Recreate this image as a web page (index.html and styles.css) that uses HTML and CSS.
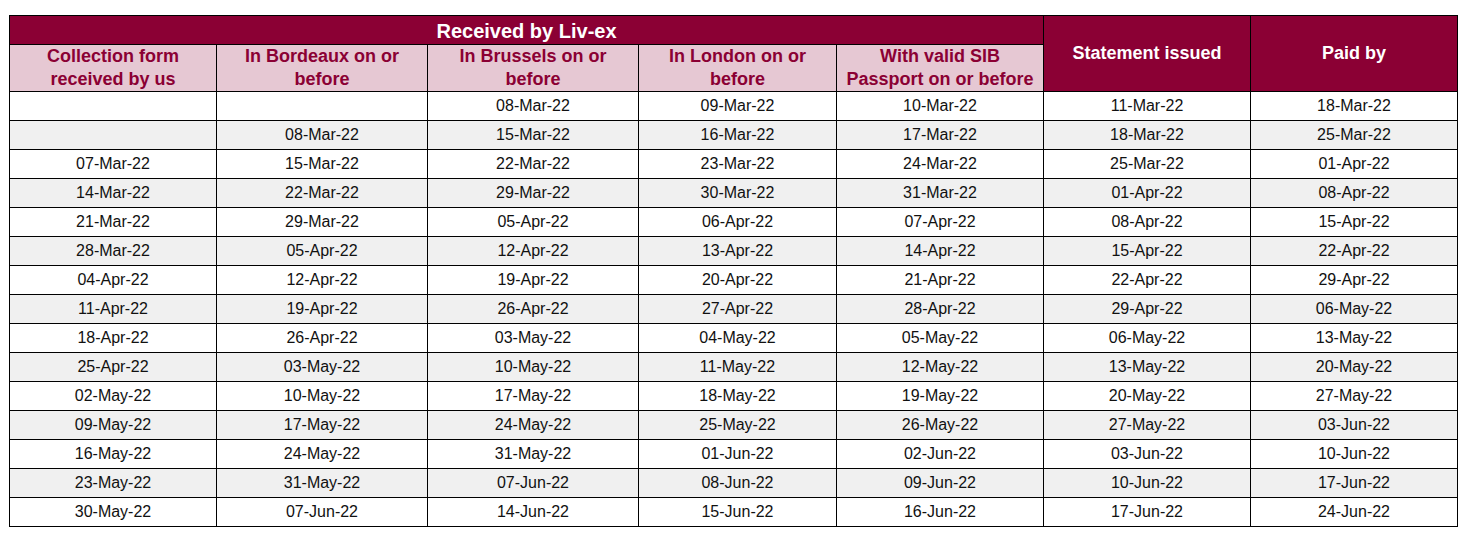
FILE: index.html
```html
<!DOCTYPE html>
<html>
<head>
<meta charset="utf-8">
<link rel="stylesheet" href="styles.css">
</head>
<body>
<table class="sched">
  <colgroup>
    <col class="c1"><col class="c2"><col class="c3"><col class="c4"><col class="c5"><col class="c6"><col class="c7">
  </colgroup>
  <thead>
    <tr class="h1">
      <th colspan="5" class="dark top">Received by Liv-ex</th>
      <th rowspan="2" class="dark side">Statement issued</th>
      <th rowspan="2" class="dark side">Paid by</th>
    </tr>
    <tr class="h2">
      <th class="pink">Collection form<br>received by us</th>
      <th class="pink">In Bordeaux on or<br>before</th>
      <th class="pink">In Brussels on or<br>before</th>
      <th class="pink">In London on or<br>before</th>
      <th class="pink">With valid SIB<br>Passport on or before</th>
    </tr>
  </thead>
  <tbody>
    <tr><td></td><td></td><td>08-Mar-22</td><td>09-Mar-22</td><td>10-Mar-22</td><td>11-Mar-22</td><td>18-Mar-22</td></tr>
    <tr><td></td><td>08-Mar-22</td><td>15-Mar-22</td><td>16-Mar-22</td><td>17-Mar-22</td><td>18-Mar-22</td><td>25-Mar-22</td></tr>
    <tr><td>07-Mar-22</td><td>15-Mar-22</td><td>22-Mar-22</td><td>23-Mar-22</td><td>24-Mar-22</td><td>25-Mar-22</td><td>01-Apr-22</td></tr>
    <tr><td>14-Mar-22</td><td>22-Mar-22</td><td>29-Mar-22</td><td>30-Mar-22</td><td>31-Mar-22</td><td>01-Apr-22</td><td>08-Apr-22</td></tr>
    <tr><td>21-Mar-22</td><td>29-Mar-22</td><td>05-Apr-22</td><td>06-Apr-22</td><td>07-Apr-22</td><td>08-Apr-22</td><td>15-Apr-22</td></tr>
    <tr><td>28-Mar-22</td><td>05-Apr-22</td><td>12-Apr-22</td><td>13-Apr-22</td><td>14-Apr-22</td><td>15-Apr-22</td><td>22-Apr-22</td></tr>
    <tr><td>04-Apr-22</td><td>12-Apr-22</td><td>19-Apr-22</td><td>20-Apr-22</td><td>21-Apr-22</td><td>22-Apr-22</td><td>29-Apr-22</td></tr>
    <tr><td>11-Apr-22</td><td>19-Apr-22</td><td>26-Apr-22</td><td>27-Apr-22</td><td>28-Apr-22</td><td>29-Apr-22</td><td>06-May-22</td></tr>
    <tr><td>18-Apr-22</td><td>26-Apr-22</td><td>03-May-22</td><td>04-May-22</td><td>05-May-22</td><td>06-May-22</td><td>13-May-22</td></tr>
    <tr><td>25-Apr-22</td><td>03-May-22</td><td>10-May-22</td><td>11-May-22</td><td>12-May-22</td><td>13-May-22</td><td>20-May-22</td></tr>
    <tr><td>02-May-22</td><td>10-May-22</td><td>17-May-22</td><td>18-May-22</td><td>19-May-22</td><td>20-May-22</td><td>27-May-22</td></tr>
    <tr><td>09-May-22</td><td>17-May-22</td><td>24-May-22</td><td>25-May-22</td><td>26-May-22</td><td>27-May-22</td><td>03-Jun-22</td></tr>
    <tr><td>16-May-22</td><td>24-May-22</td><td>31-May-22</td><td>01-Jun-22</td><td>02-Jun-22</td><td>03-Jun-22</td><td>10-Jun-22</td></tr>
    <tr><td>23-May-22</td><td>31-May-22</td><td>07-Jun-22</td><td>08-Jun-22</td><td>09-Jun-22</td><td>10-Jun-22</td><td>17-Jun-22</td></tr>
    <tr><td>30-May-22</td><td>07-Jun-22</td><td>14-Jun-22</td><td>15-Jun-22</td><td>16-Jun-22</td><td>17-Jun-22</td><td>24-Jun-22</td></tr>
  </tbody>
</table>
</body>
</html>
```
FILE: styles.css
```css
html, body {
  margin: 0;
  padding: 0;
  background: #ffffff;
}
body {
  padding: 15px 0 0 9px;
  font-family: "Liberation Sans", Arial, sans-serif;
}
.sched {
  border-collapse: collapse;
  table-layout: fixed;
  width: 1448px;
}
.c1 { width: 207px; }
.c2 { width: 211px; }
.c3 { width: 211px; }
.c4 { width: 198px; }
.c5 { width: 207px; }
.c6 { width: 207px; }
.c7 { width: 207px; }
.sched th, .sched td {
  border: 1px solid #000;
  padding: 0;
  text-align: center;
  vertical-align: middle;
}
.h1 { height: 29px; }
.h2 { height: 46px; }
.dark {
  background: #8b0034;
  color: #ffffff;
  font-weight: bold;
  font-size: 18px;
}
.dark.top {
  font-size: 20px;
  line-height: 26px;
  padding-top: 2px;
}
.pink {
  background: #e6c8d3;
  color: #8b0034;
  font-weight: bold;
  font-size: 18px;
  line-height: 23px;
  padding-top: 2px;
}
.sched tbody tr { height: 29px; }
.sched td {
  font-size: 16px;
  color: #111;
}
.sched tbody tr:nth-child(even) td {
  background: #f0f0f0;
}
```
